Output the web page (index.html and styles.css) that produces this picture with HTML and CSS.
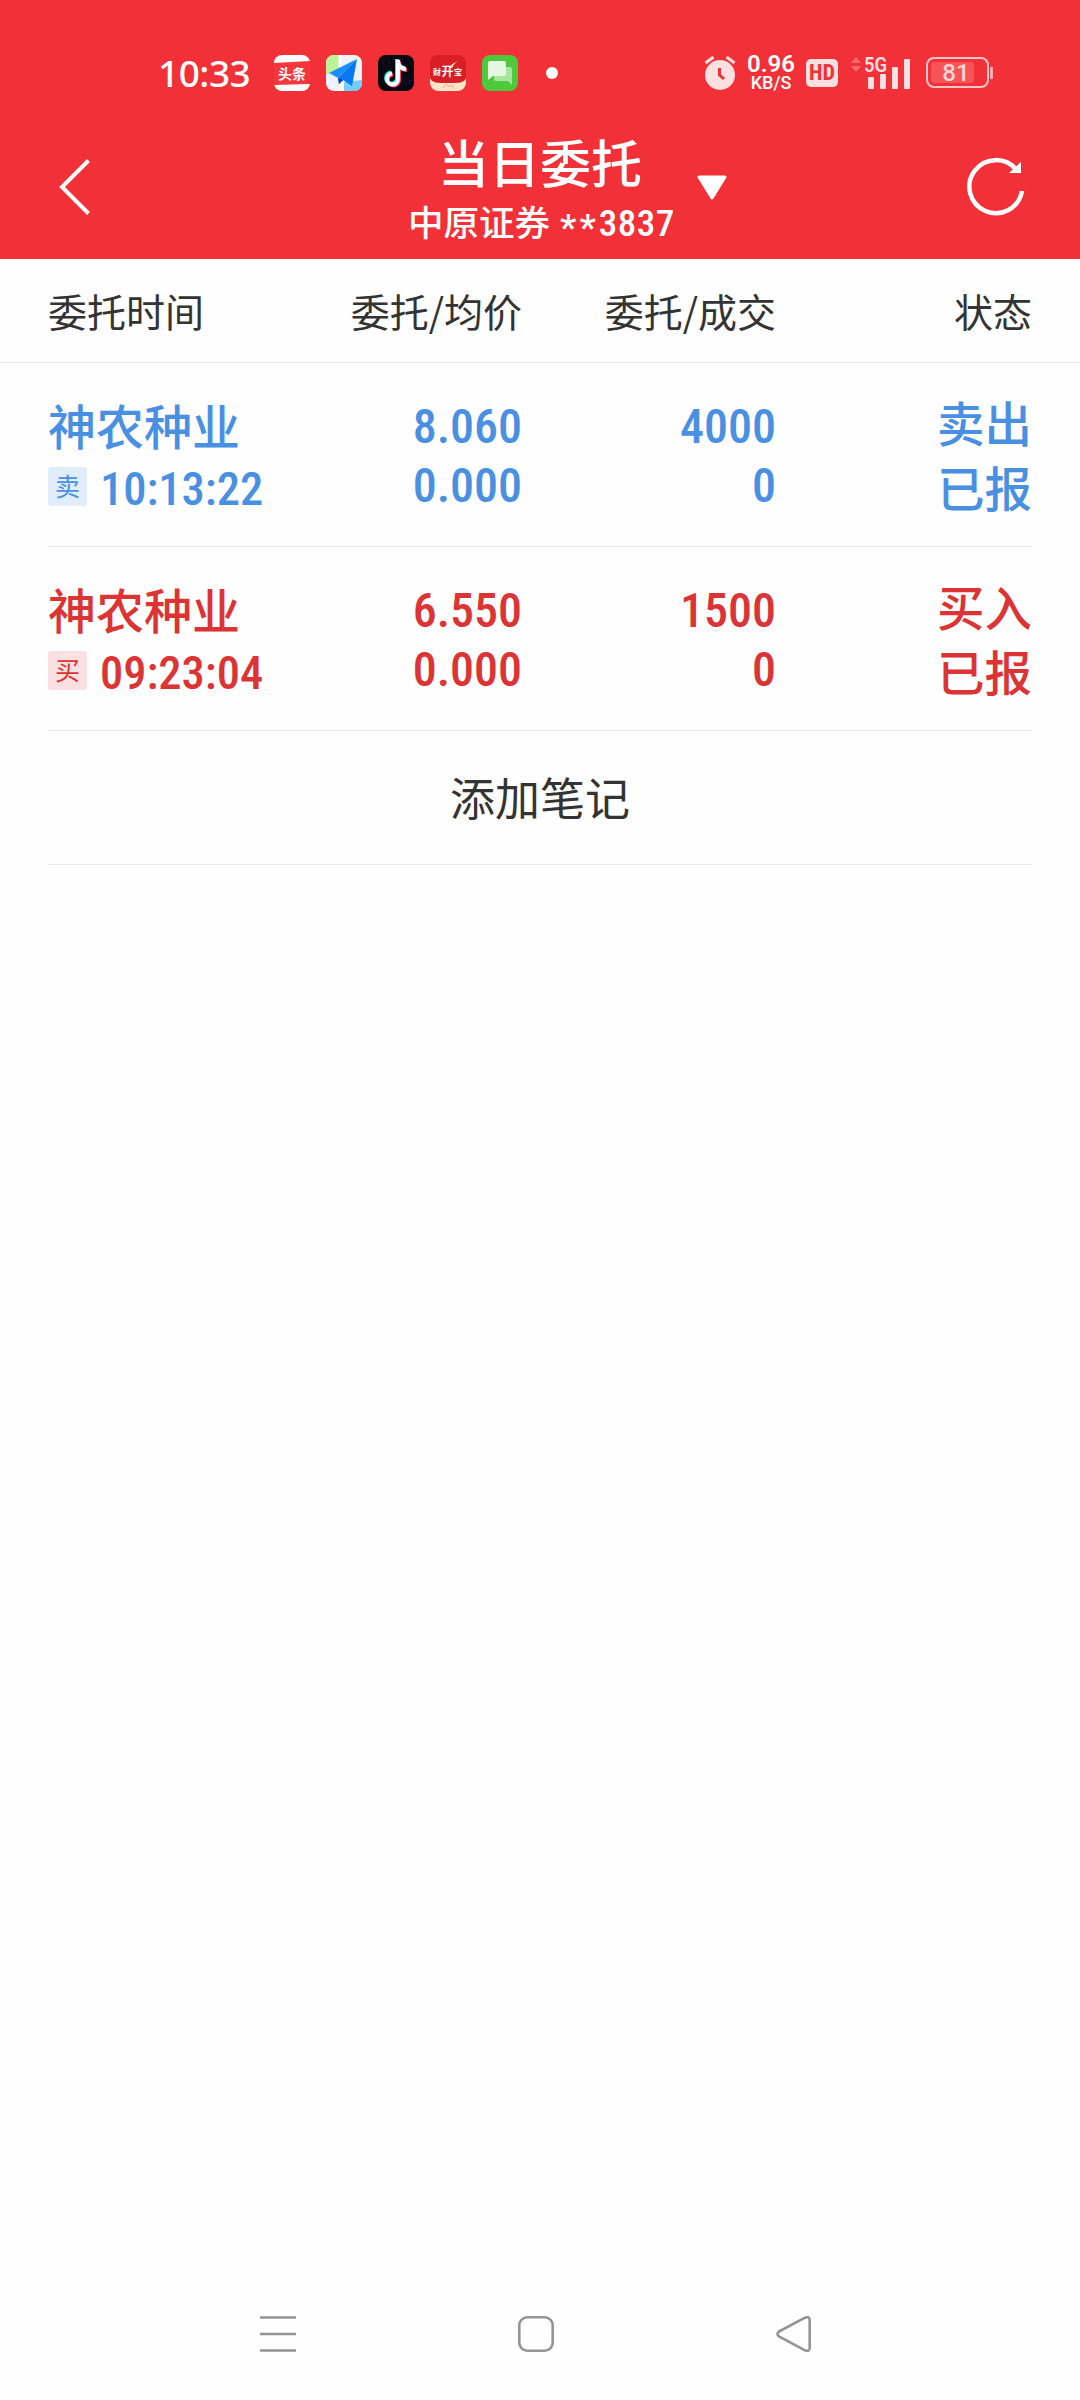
FILE: index.html
```html
<!DOCTYPE html>
<html lang="zh-CN">
<head>
  <meta charset="UTF-8" />
  <meta name="viewport" content="width=device-width, initial-scale=1.0" />
  <title>当日委托</title>
  <link rel="stylesheet" href="styles.css">
</head>
<body>
  <header class="top">
    <!-- Status bar -->
    <div class="status">
      <span class="clock">10:33</span>
      <div class="apps">
        <svg width="36" height="36" viewBox="0 0 36 36">
          <rect width="36" height="36" rx="8" fill="#fff" />
          <path d="M0 8l36-2v23l-36 1z" fill="#f5363b" />
          <text x="18" y="24" text-anchor="middle" class="app-text" font-size="14">头条</text>
        </svg>
        <svg width="36" height="36" viewBox="0 0 36 36">
          <rect width="36" height="36" rx="8" fill="#eef3fa" />
          <path d="M8 0h6v14L0 20V8a8 8 0 0 1 8-8z" fill="#bdf29a" />
          <path d="M18 27l18-2v3a8 8 0 0 1-8 8H18z" fill="#74ccfa" />
          <path d="M14 0v12M16 26v10" stroke="#fff" stroke-width="3" />
          <path d="M31 4L3 18l9 5z" fill="#1a8dff" />
          <path d="M31 4L12 23l1 6 4-4 9 6z" fill="#0878f5" />
          <path d="M12 23l1 6 4-4z" fill="#0547b5" />
        </svg>
        <svg width="36" height="36" viewBox="0 0 36 36">
          <rect width="36" height="36" rx="8" fill="#070811" />
          <circle cx="8" cy="8" r="3.500" fill="none" stroke="#6b1a2c" stroke-dasharray="1 1.500" />
          <circle cx="29" cy="26" r="3" fill="none" stroke="#29357c" stroke-dasharray="1 1.500" />
          <g fill="none" stroke-width="4">
            <path d="M19 4v19a5.500 5.500 0 1 1-6-5.500M19 6c1 5 4 7 8 7" stroke="#25e5e2" />
            <path d="M21 6v19a5.500 5.500 0 1 1-6-5.500M21 8c1 5 4 7 8 7" stroke="#f53b62" />
            <path d="M20 5v19a5.500 5.500 0 1 1-6-5.500M20 7c1 5 4 7 8 7" stroke="#fff" />
          </g>
        </svg>
        <svg width="36" height="36" viewBox="0 0 36 36">
          <rect width="36" height="36" rx="8" fill="#d91f25" />
          <path d="M0 23c2 5 7 5 18 5s16 0 18-5c1 7-2 13-8 13H8C2 36-1 30 0 23z" fill="#ffe6c8" />
          <path d="M13 33l3-4 3 3 3-2 2 4" fill="none" stroke="#f1b179" />
          <text x="7" y="20" text-anchor="middle" class="app-text" font-size="8">财</text>
          <text x="17.500" y="21" text-anchor="middle" class="app-text" font-size="12">开</text>
          <text x="28" y="20" text-anchor="middle" class="app-text" font-size="8">宝</text>
          <path d="M20 13c1-4 4-5 8-7-3 2-5 4-6 7z" fill="#ffe6c8" />
        </svg>
        <svg width="36" height="36" viewBox="0 0 36 36">
          <rect width="36" height="36" rx="8" fill="#4fc93c" />
          <path d="M14 12h14q2 0 2 2v16l-4-4H14q-2 0-2-2V14q0-2 2-2z" fill="#a5e59c" />
          <path d="M8 6h14q2 0 2 2v11q0 2-2 2H11l-5 4V8q0-2 2-2z" fill="#e4f8e1" />
        </svg>
      </div>
      <span class="dot"></span>

      <div class="signals">
        <svg class="alarm" width="32" height="36" viewBox="0 0 32 36">
          <circle cx="16" cy="20" r="15" fill="#ffe0e1" />
          <path d="M1.500 8l8-6M30.500 8l-8-6" stroke="#ffe0e1" stroke-width="3" />
          <path d="M15.500 13v7l4.500 4" fill="none" stroke="#f23037" stroke-width="3" />
        </svg>
        <div class="speed"><b>0.96</b><span>KB/S</span></div>
        <span class="hd">HD</span>
        <svg class="cell" width="60" height="46" viewBox="0 -6 60 46">
          <path d="M0 7l5-6 5 6zM0 10h10l-5 6z" fill="#f8696e" />
          <g fill="#ffe0e1">
            <text x="13" y="16" class="net" textLength="23" lengthAdjust="spacingAndGlyphs">5G</text>
            <rect x="17" y="21" width="6" height="12" rx="1" />
            <rect x="29" y="18" width="6" height="15" rx="1" />
            <rect x="41" y="11" width="6" height="22" rx="1" />
            <rect x="53" y="3" width="6" height="30" rx="1" />
          </g>
        </svg>
        <svg width="68" height="32" viewBox="0 0 68 32">
          <rect x="1" y="1" width="61" height="29" rx="7" fill="none" stroke="#ffc4c6" stroke-width="2" />
          <rect x="5" y="5" width="43" height="21" rx="3" fill="#f75459" />
          <path d="M65.500 11v10" stroke="#ffc4c6" stroke-width="2.500" stroke-linecap="round" />
          <text x="30" y="24" text-anchor="middle" class="charge">81</text>
        </svg>
      </div>
    </div>

    <!-- Title bar -->
    <div class="bar">
      <svg width="32" height="56" viewBox="0 0 32 56">
        <path d="M29.500 1.500L3 28l26.500 26.500" fill="none" stroke="#fff" stroke-width="4" />
      </svg>
      <div class="heading">
        <div class="titles">
          <h1>当日委托</h1>
          <p>中原证券 <span class="num"><span class="mask">**</span>3837</span></p>
        </div>
        <svg class="caret" width="30" height="25" viewBox="0 0 30 25">
          <path d="M2 2h26L15 23z" fill="#fff" stroke="#fff" stroke-width="3" stroke-linejoin="round" />
        </svg>
      </div>
      <svg width="60" height="60" viewBox="0 0 60 60">
        <path d="M50.500 13A26.500 26.500 0 1 0 56 34" fill="none" stroke="#fff" stroke-width="4.500" />
        <path d="M55 5v11H43z" fill="#fff" />
      </svg>
    </div>
  </header>

  <main>
    <div class="row head">
      <span>委托时间</span>
      <span>委托/均价</span>
      <span>委托/成交</span>
      <span>状态</span>
    </div>

    <div class="list">
      <div class="row order sell">
        <div class="stock">
          <strong>神农种业</strong>
          <div class="time"><i class="tag">卖</i><span class="num">10:13:22</span></div>
        </div>
        <div class="values num"><span>8.060</span><span>0.000</span></div>
        <div class="values num"><span>4000</span><span>0</span></div>
        <div class="state"><span>卖出</span><span>已报</span></div>
      </div>
      <div class="row order buy">
        <div class="stock">
          <strong>神农种业</strong>
          <div class="time"><i class="tag">买</i><span class="num">09:23:04</span></div>
        </div>
        <div class="values num"><span>6.550</span><span>0.000</span></div>
        <div class="values num"><span>1500</span><span>0</span></div>
        <div class="state"><span>买入</span><span>已报</span></div>
      </div>
      <div class="note">添加笔记</div>
    </div>
  </main>

  <!-- System navigation -->
  <nav>
    <svg width="36" height="36" viewBox="0 0 36 36">
      <path d="M0 1.500h36M0 18h36M0 34.500h36" />
    </svg>
    <svg width="36" height="36" viewBox="0 0 36 36">
      <rect x="1.300" y="1.300" width="33.400" height="33.400" rx="8" />
    </svg>
    <svg width="36" height="36" viewBox="0 0 36 36">
      <path d="M3 15.500L29 1.700Q33.500 0 33.700 4v28q-.2 4-4.700 2.300L3 20.500q-3-2.500 0-5z" />
    </svg>
  </nav>
</body>
</html>
```
FILE: styles.css
```css
* {
  box-sizing: border-box;
}
body {
  display: flex;
  flex-direction: column;
  height: 2400px;
  margin: 0;
  background-color: #fefefe;
  color: #333;
  font-family: "Noto Sans CJK SC", sans-serif;
}
svg {
  display: block;
  flex: none;
}
h1, p {
  margin: 0;
}
.num {
  font-family: Roboto, sans-serif;
  font-stretch: 78%;
  font-weight: 550;
}
.top {
  height: 259px;
  background-color: #f23037;
  color: #fff;
}

/* status bar */
.status {
  display: flex;
  align-items: center;
  height: 115px;
  padding: 30px 86px 0 158px;
  font-family: "Noto Sans", sans-serif;
}
.clock {
  width: 116px;
  font-size: 37px;
  font-weight: 500;
  line-height: 46px;
  letter-spacing: -0.5px;
}
.apps {
  display: flex;
  gap: 16px;
}
.app-text {
  fill: #fff;
  font-family: "Noto Sans CJK SC", sans-serif;
  font-weight: 700;
}
.dot {
  width: 12px;
  height: 12px;
  margin-left: 28px;
  border-radius: 50%;
  background-color: #fff;
}
.signals {
  display: flex;
  align-items: center;
  margin-left: auto;
}
.speed {
  display: flex;
  flex-direction: column;
  align-items: center;
  width: 50px;
  margin: 0 10px;
  font-family: Roboto, sans-serif;
  font-weight: 600;
}
.speed b {
  font-size: 24px;
  font-weight: 600;
  line-height: 20px;
}
.speed span {
  font-size: 18px;
  font-weight: 500;
  line-height: 18px;
}
.hd {
  width: 32px;
  height: 28px;
  border-radius: 5px;
  background-color: #ffe0e1;
  color: #f23037;
  font: 700 22px/28px Roboto, sans-serif;
  font-stretch: 80%;
  text-align: center;
}
.cell {
  margin: 0 15px 0 13px;
}
.net {
  font: 600 20px Roboto, sans-serif;
}
.charge {
  fill: #ffd5d6;
  font: 500 24px Roboto, sans-serif;
}

/* title bar */
.bar {
  display: flex;
  align-items: center;
  justify-content: space-between;
  height: 144px;
  padding: 0 54px 0 59px;
}
.heading {
  display: flex;
  align-items: center;
  gap: 25px;
  margin-left: 78px;
}
.titles {
  width: 264px;
  padding-top: 5px;
  text-align: center;
  white-space: nowrap;
}
h1 {
  font-size: 51px;
  font-weight: 500;
  line-height: 66px;
}
p {
  font-size: 35.5px;
  font-weight: 500;
  line-height: 54px;
}
p .num {
  font-size: 37px;
  letter-spacing: 0.5px;
}
.mask {
  margin-left: 2px;
  letter-spacing: 3px;
  vertical-align: -4px;
  line-height: 1;
}

/* orders */
.row {
  display: grid;
  grid-template-columns: 240px 234px 254px 1fr;
  text-align: right;
}
.row > :first-child {
  text-align: left;
}
.head {
  height: 104px;
  padding: 0 48px;
  border-bottom: 1px solid #e9e9e9;
  font-size: 39px;
  line-height: 103px;
}
.list {
  padding: 0 48px;
}
.order {
  height: 184px;
  border-bottom: 1px solid #e9e9e9;
}
.sell {
  color: #4a90e2;
}
.buy {
  color: #dc3434;
}
.stock {
  padding-top: 28px;
}
.stock strong {
  display: block;
  font-size: 48px;
  font-weight: 500;
  line-height: 66px;
}
.time {
  display: flex;
  align-items: center;
  gap: 13px;
  height: 58px;
}
.time .num {
  padding-top: 5px;
  font-size: 46.5px;
}
.tag {
  width: 39px;
  height: 39px;
  border-radius: 3px;
  font-size: 25px;
  font-style: normal;
  line-height: 37px;
  text-align: center;
}
.sell .tag {
  background-color: #e1edfb;
}
.buy .tag {
  background-color: #fae0e0;
}
.values span, .state span {
  display: block;
}
.values {
  padding-top: 34px;
  font-size: 48px;
  line-height: 59px;
}
.state {
  padding-top: 26px;
  font-size: 47.5px;
  font-weight: 500;
  line-height: 65px;
}
.note {
  height: 134px;
  border-bottom: 1px solid #e9e9e9;
  font-size: 45px;
  line-height: 131px;
  text-align: center;
}

/* bottom navigation */
nav {
  display: flex;
  justify-content: space-between;
  margin: auto 268px 48px 260px;
}
nav svg {
  fill: none;
  stroke: #949494;
  stroke-width: 2.6;
}
```
